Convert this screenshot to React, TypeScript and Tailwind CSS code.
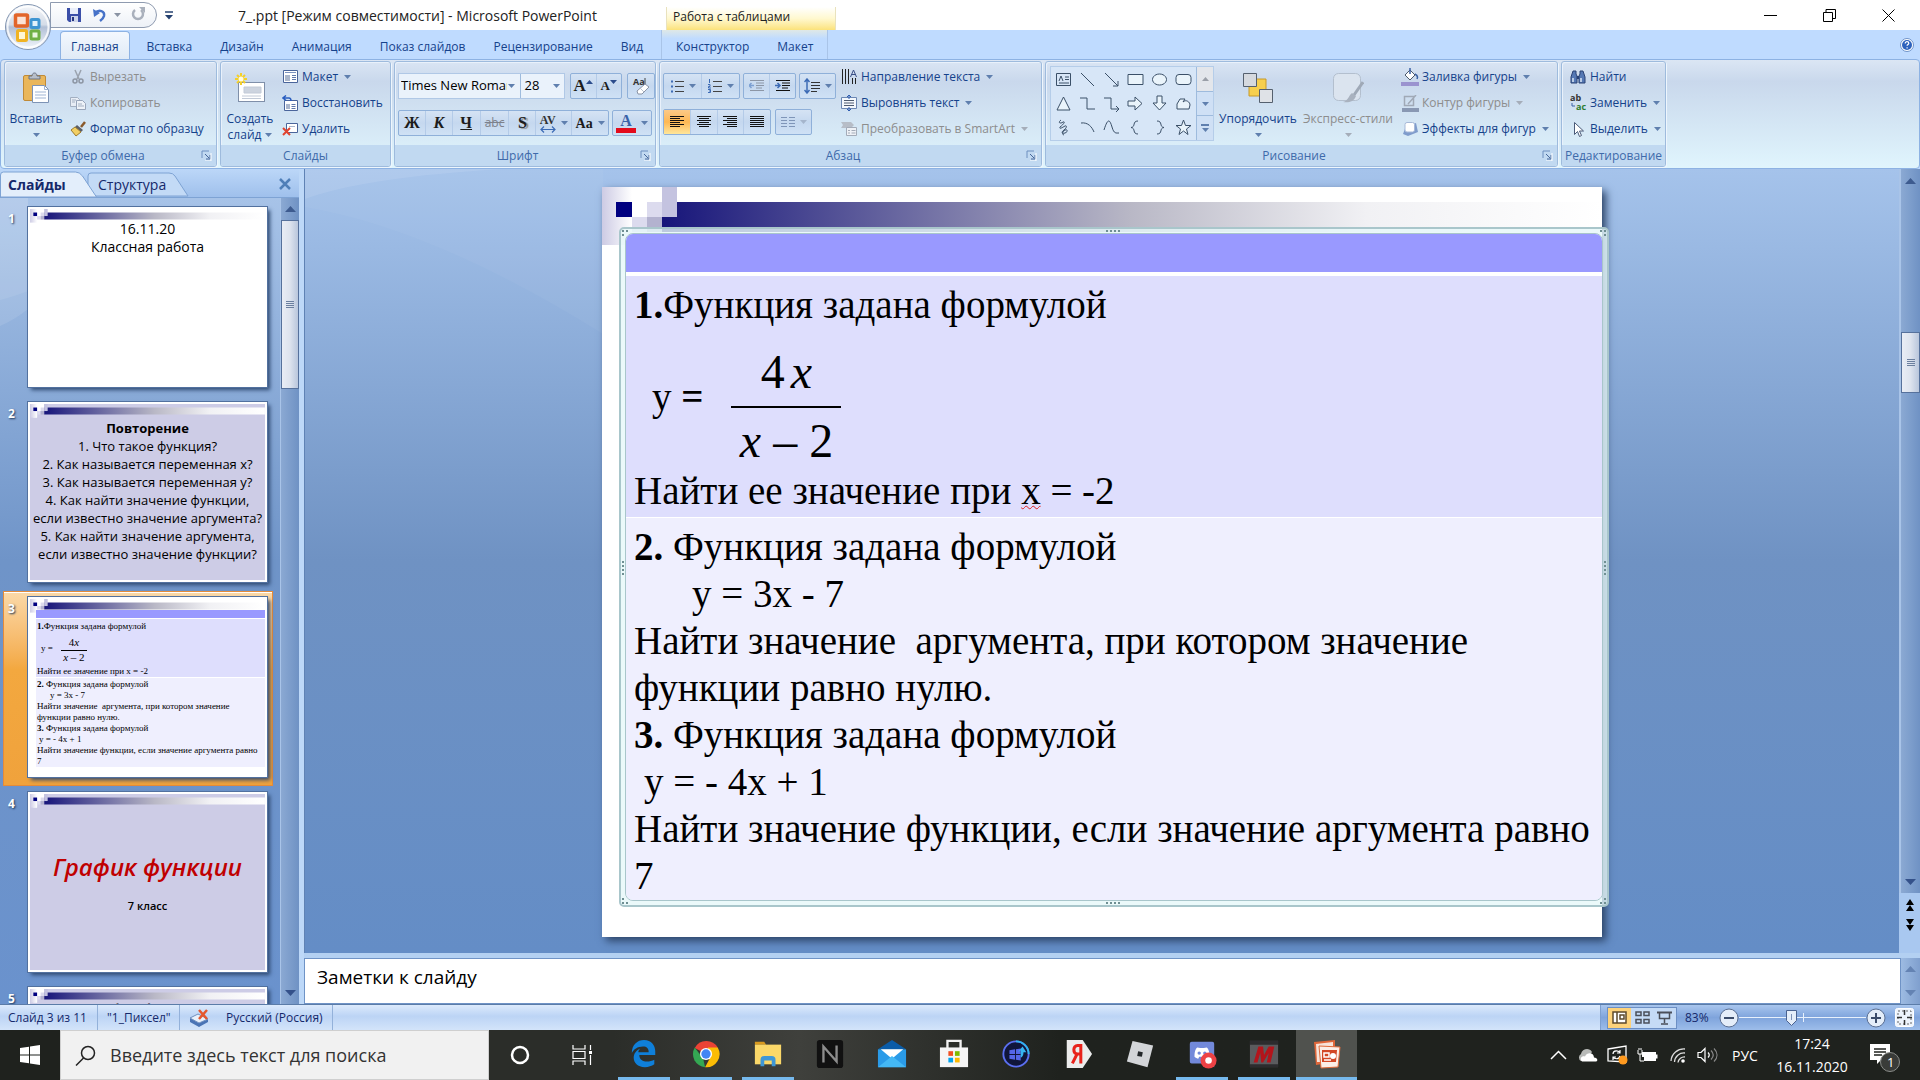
import type { ReactNode } from 'react';

const TABS = ['Вставка', 'Дизайн', 'Анимация', 'Показ слайдов', 'Рецензирование', 'Вид'];

const RUNNING = 'border-[#76b9ed]';
const IDLE = 'border-transparent';

/* ---------- small shared pieces ---------- */

function Caret({ className = 'text-[#5f7fae]' }: { className?: string }) {
  return (
    <svg width="7" height="4" viewBox="0 0 7 4" className={`shrink-0 ${className}`} aria-hidden="true">
      <path d="M0 0h7L3.5 4z" fill="currentColor" />
    </svg>
  );
}

function Svg({ w = 16, h = 16, children }: { w?: number; h?: number; children: ReactNode }) {
  return (
    <svg width={w} height={h} viewBox={`0 0 ${w} ${h}`} fill="none" className="shrink-0" aria-hidden="true">
      {children}
    </svg>
  );
}

function Group({ title, className, launcher, children }: { title: string; className: string; launcher?: boolean; children: ReactNode }) {
  return (
    <section
      aria-label={title}
      className={`flex shrink-0 flex-col overflow-hidden rounded-[3px] border border-[#9ebbdd] shadow-[inset_1px_1px_0_#e9f1fb,1px_1px_0_#eef6fd] ${className}`}
    >
      <div className="flex h-[84px] pt-[2px]">{children}</div>
      <div className="flex h-[21px] items-center bg-[#c1d9f1] text-xs leading-5 text-[#3e6aaa]">
        <span className="flex-1 text-center">{title}</span>
        {launcher && (
          <button type="button" aria-label={`${title}: параметры`} className="mr-1">
            <Svg w={11} h={11}>
              <path d="M1 8V1h7" stroke="#6d8fbf" />
              <path d="M4 4l4 4M9 5v4H5" stroke="#46679a" />
              <path d="M10 3v8H4" stroke="#fff" />
            </Svg>
          </button>
        )}
      </div>
    </section>
  );
}

function SmallButton({ icon, label, caret, disabled }: { icon: ReactNode; label: string; caret?: boolean; disabled?: boolean }) {
  return (
    <button
      type="button"
      disabled={disabled}
      className={`flex h-[26px] items-center gap-1 text-xs whitespace-nowrap ${disabled ? 'text-[#8d8d8d]' : 'text-[#15428b]'}`}
    >
      <span className="flex w-4 justify-center">{icon}</span>
      <span>{label}</span>
      {caret && <Caret className={disabled ? 'ml-[2px] text-[#a5adb9]' : 'ml-[2px] text-[#5f7fae]'} />}
    </button>
  );
}

function LargeButton({ icon, lines, className = '', disabled }: { icon: ReactNode; lines: string[]; className?: string; disabled?: boolean }) {
  return (
    <button
      type="button"
      disabled={disabled}
      className={`flex flex-col items-center text-xs leading-4 whitespace-nowrap ${disabled ? 'text-[#8d8d8d]' : 'text-[#15428b]'} ${className}`}
    >
      <span className="flex h-[47px] items-center">{icon}</span>
      <span>{lines[0]}</span>
      <span className="flex h-4 items-center gap-1">
        {lines[1]}
        <Caret className={disabled ? 'text-[#a5adb9]' : 'text-[#5f7fae]'} />
      </span>
    </button>
  );
}

function ButtonStrip({ className = '', children }: { className?: string; children: ReactNode }) {
  return (
    <div className={`flex h-[26px] divide-x divide-[#b4cbe8] rounded-[2px] border border-[#8fb0d9] bg-linear-to-b from-[#d5e3f4] via-[#c5d8ef] to-[#cfe1f5] ${className}`}>
      {children}
    </div>
  );
}

function Tool({ label, className = 'flex-1', children }: { label: string; className?: string; children: ReactNode }) {
  return (
    <button type="button" aria-label={label} className={`flex items-center justify-center gap-[5px] ${className}`}>
      {children}
    </button>
  );
}

function Lines({ rows, color = '#111' }: { rows: [number, number][]; color?: string }) {
  return (
    <Svg w={16} h={14}>
      {rows.map(([x, w], i) => (
        <path key={i} d={`M${x} ${i * 2 + 1.5}h${w}`} stroke={color} />
      ))}
    </Svg>
  );
}

/* ---------- title bar and tabs ---------- */

function OfficeButton() {
  return (
    <button type="button" aria-label="Кнопка Office" className="absolute top-[3px] left-[4px] z-10">
      <svg width="48" height="48" viewBox="0 0 48 48" aria-hidden="true">
        <defs>
          <linearGradient id="orb" x1="0" y1="0" x2="0" y2="1">
            <stop offset="0" stopColor="#f5f7fa" />
            <stop offset="0.45" stopColor="#d4dce8" />
            <stop offset="0.5" stopColor="#b2c0d6" />
            <stop offset="1" stopColor="#f4f8fd" />
          </linearGradient>
        </defs>
        <circle cx="24" cy="24" r="22.5" fill="url(#orb)" stroke="#8194b0" />
        <circle cx="24" cy="24" r="20.5" fill="none" stroke="#fff" strokeWidth="2" opacity="0.8" />
        <rect x="11.5" y="12" width="12" height="11" rx="1" fill="#fbe3d6" stroke="#e2652a" strokeWidth="3.5" />
        <rect x="27" y="16.5" width="8" height="8" rx="1" fill="#e3f1fb" stroke="#3f95d2" strokeWidth="3" />
        <rect x="13.5" y="27.5" width="9" height="10" rx="1" fill="#fff7d6" stroke="#f0b323" strokeWidth="3" />
        <rect x="27" y="28" width="8" height="8" rx="1" fill="#e9f6dd" stroke="#6fb043" strokeWidth="3" />
      </svg>
    </button>
  );
}

function TitleBar() {
  return (
    <header className="flex h-[30px] items-start bg-white pr-[10px]">
      <div className="mt-[2px] ml-[50px] flex h-[26px] w-[107px] items-center rounded-r-full border border-[#8f9bb0] bg-linear-to-b from-white to-[#edf1f7] pl-[15px]">
        <button type="button" aria-label="Сохранить">
          <Svg>
            <path d="M1 1h14v14H3l-2-2z" fill="#3b4fa8" />
            <path d="M4 1h8v6H4z" fill="#e9eefa" />
            <path d="M5 9h7v6H5z" fill="#cdd5ea" />
            <path d="M6 10h2v4H6z" fill="#26357f" />
          </Svg>
        </button>
        <button type="button" aria-label="Отменить" className="ml-[10px]">
          <Svg w={15}>
            <path d="M3 6c4-4 10-2 9 3-.5 2-2 3.5-4 5" stroke="#4672c8" strokeWidth="2.5" />
            <path d="M1 2l1 8 6-4z" fill="#4672c8" />
          </Svg>
        </button>
        <Caret className="ml-[7px] text-[#8a93a3]" />
        <button type="button" aria-label="Вернуть" className="ml-[10px]">
          <Svg w={14}>
            <path d="M4 3a5 5 0 1 0 6 0" stroke="#a9b0bc" strokeWidth="2.5" />
            <path d="M8 0h6v6z" fill="#a9b0bc" />
          </Svg>
        </button>
      </div>
      <button type="button" aria-label="Настройка панели быстрого доступа" className="mt-[11px] ml-[8px]">
        <Svg w={8} h={9}>
          <path d="M0 1h8" stroke="#24406f" strokeWidth="1.5" />
          <path d="M0 4h8L4 8.5z" fill="#24406f" />
        </Svg>
      </button>
      <h1 className="ml-[65px] w-[428px] text-[14px] leading-[32px] whitespace-nowrap text-[#222]">7_.ppt [Режим совместимости] - Microsoft PowerPoint</h1>
      <div className="mt-[7px] h-[23px] w-[170px] border-x border-[#e9e2bd] bg-linear-to-b from-white via-[#fff8cf] to-[#fbe27a] pl-[6px] text-xs leading-[19px] whitespace-nowrap text-[#222]">
        Работа с таблицами
      </div>
      <div className="ml-auto flex h-[30px] items-center gap-[46px]">
        <button type="button" aria-label="Свернуть">
          <Svg w={13} h={13}>
            <path d="M0 6.5h13" stroke="#000" />
          </Svg>
        </button>
        <button type="button" aria-label="Свернуть в окно">
          <Svg w={13} h={13}>
            <path d="M.5 3.5h9v9h-9zM3 3.5v-3h9.5v9H10" stroke="#000" />
          </Svg>
        </button>
        <button type="button" aria-label="Закрыть" className="mr-[15px]">
          <Svg w={13} h={13}>
            <path d="M.5.5l12 12M12.5.5l-12 12" stroke="#000" />
          </Svg>
        </button>
      </div>
    </header>
  );
}

function TabRow() {
  return (
    <nav className="flex h-[29px] items-end bg-[#bfdbff] pl-[60px] text-xs leading-[25px] whitespace-nowrap text-[#15428b]">
      <button type="button" className="h-[28px] rounded-t-[4px] border border-b-0 border-[#8db2e3] bg-linear-to-b from-[#f3f8fe] to-[#e0eaf6] px-[10px] pt-[2px]">
        Главная
      </button>
      <div className="ml-[3px] flex">
        {TABS.map((tab) => (
          <button key={tab} type="button" className="px-[14px]">
            {tab}
          </button>
        ))}
      </div>
      <div className="ml-[4px] flex h-[29px] items-end border-x border-[#a9c4e8] bg-linear-to-b from-[#dfe8e6] to-[#bfdbff] to-30%">
        <button type="button" className="px-[14px]">Конструктор</button>
        <button type="button" className="px-[14px]">Макет</button>
      </div>
      <button type="button" aria-label="Справка" className="mr-[6px] mb-[7px] ml-auto">
        <Svg w={14} h={14}>
          <circle cx="7" cy="7" r="6.5" fill="#fff" stroke="#6f93c9" />
          <circle cx="7" cy="7" r="5" fill="#2d62bd" />
          <path d="M5.2 5.5c0-2.5 3.6-2.3 3.6-.2 0 1.2-1.7 1.3-1.7 2.5M7.1 9.2v1.2" stroke="#fff" strokeWidth="1.2" />
        </Svg>
      </button>
    </nav>
  );
}

/* ---------- ribbon ---------- */

function ClipboardGroup() {
  return (
    <Group title="Буфер обмена" className="w-[213px]" launcher>
      <LargeButton
        className="w-[62px]"
        lines={['Вставить', '']}
        icon={
          <Svg w={28} h={32}>
            <rect x="1.5" y="3.5" width="22" height="25" rx="1.5" fill="#eab65a" stroke="#c08a37" />
            <path d="M7 7V4h3c0-4 5-4 5 0h3v3z" fill="#b7bec9" stroke="#6b7280" />
            <path d="M10.5 13.5h12l4 4v13h-16z" fill="#fff" stroke="#7d93b5" />
            <path d="M22.5 13.5v4h4M13 20h11M13 23h11M13 26h11" stroke="#9fb4d3" />
          </Svg>
        }
      />
      <div className="ml-[3px] flex flex-col">
        <SmallButton disabled label="Вырезать" icon={
          <Svg>
            <path d="M5 1l4 9M11 1L7 10" stroke="#9aa2ae" strokeWidth="1.5" />
            <circle cx="5" cy="12" r="2" stroke="#8c95a3" strokeWidth="1.5" />
            <circle cx="11" cy="12" r="2" stroke="#8c95a3" strokeWidth="1.5" />
          </Svg>
        } />
        <SmallButton disabled label="Копировать" icon={
          <Svg>
            <path d="M.5 2.5h7l2 2v7h-9z" fill="#e8edf5" stroke="#a3afc1" />
            <path d="M6.5 5.5h6l3 3v6h-9z" fill="#eef2f8" stroke="#98a5ba" />
            <path d="M8 9h4M8 11h6M2 5h4M2 7h3" stroke="#a3afc1" />
          </Svg>
        } />
        <SmallButton label="Формат по образцу" icon={
          <Svg>
            <path d="M15 1l-4 5" stroke="#8a5a2b" strokeWidth="2.5" />
            <path d="M7 4l6 5-2 2-6-5z" fill="#5b5f68" />
            <path d="M5 6l6 5-5 4-5-6z" fill="#f2cf63" stroke="#9c7a2c" />
          </Svg>
        } />
      </div>
    </Group>
  );
}

function SlidesGroup() {
  return (
    <Group title="Слайды" className="w-[171px]">
      <LargeButton
        className="w-[58px]"
        lines={['Создать', 'слайд']}
        icon={
          <Svg w={32} h={32}>
            <rect x="4.5" y="10.5" width="26" height="19" fill="#fff" stroke="#7f8fa9" />
            <path d="M10 15h17v6H10zM8 24h19M8 26.5h19" fill="#cdd4df" stroke="#c2cad7" />
            <path d="M7 1v12M1 7h12M3 3l8 8M11 3l-8 8" stroke="#f4cf2b" strokeWidth="2" />
            <circle cx="7" cy="7" r="2.5" fill="#fffbe0" />
          </Svg>
        }
      />
      <div className="ml-[3px] flex flex-col">
        <SmallButton caret label="Макет" icon={
          <Svg w={15} h={14}>
            <path d="M.5.5h14v12H.5z" fill="#fff" stroke="#4a659b" />
            <path d="M2 2.5h11" stroke="#7c93bf" />
            <path d="M2 5h5v6H2z" fill="#aab6cb" />
            <path d="M9 5.5h4M9 7.5h4M9 9.5h4" stroke="#5f78ab" />
          </Svg>
        } />
        <SmallButton label="Восстановить" icon={
          <Svg>
            <path d="M2.5 5.5h13v10h-13z" fill="#fff" stroke="#4a659b" />
            <path d="M4 9h4v5H4z" fill="#aab6cb" />
            <path d="M9.5 9.5h4M9.5 11.5h4M9.5 13.5h4" stroke="#5f78ab" />
            <path d="M2 3h5c2 0 2 2 2 3M4 .5L1 3l3 2.5" stroke="#2b5fc0" strokeWidth="1.5" />
          </Svg>
        } />
        <SmallButton label="Удалить" icon={
          <Svg>
            <path d="M4.5 2.5h11v9h-11z" fill="#fff" stroke="#4a659b" />
            <path d="M7 5.5h6" stroke="#aab6cb" />
            <path d="M1 7l7 7M8 7l-7 7" stroke="#e0432f" strokeWidth="2" />
          </Svg>
        } />
      </div>
    </Group>
  );
}

function FontGroup() {
  const glyph = "font-['Liberation_Serif',serif] font-bold text-[#1c1c1c]";
  return (
    <Group title="Шрифт" className="w-[262px]" launcher>
      <div className="flex flex-col gap-[11px] px-[3px] pt-[9px]">
        <div className="flex gap-[5px]">
          <div className="flex h-[26px] w-[167px] divide-x divide-[#9ebbdd] border border-[#b0c8e6] bg-[#eaf2fb] text-[13px]">
            <label className="flex w-[124px] items-center pr-[5px] pl-[2px]">
              <input aria-label="Шрифт" defaultValue="Times New Roman" className="w-[106px] min-w-0 flex-1 text-black outline-none" />
              <Caret className="ml-[1px] text-[#5f7fae]" />
            </label>
            <label className="flex w-[43px] items-center pr-[4px] pl-[3px]">
              <input aria-label="Размер шрифта" defaultValue="28" className="w-[20px] min-w-0 flex-1 text-black outline-none" />
              <Caret />
            </label>
          </div>
          <ButtonStrip className="w-[52px]">
            <Tool label="Увеличить размер шрифта">
              <span className={`text-[17px] ${glyph}`}>A</span>
              <span className="-ml-[5px] mb-[9px] rotate-180"><Caret className="text-[#2b4c8c]" /></span>
            </Tool>
            <Tool label="Уменьшить размер шрифта">
              <span className={`text-[13px] ${glyph}`}>A</span>
              <span className="-ml-[5px] mb-[9px]"><Caret className="text-[#2b4c8c]" /></span>
            </Tool>
          </ButtonStrip>
          <ButtonStrip className="w-[28px]">
            <Tool label="Очистить формат">
              <Svg w={18} h={20}>
                <text x="1" y="9" fontSize="9" fontWeight="700" fill="#333">Aa</text>
                <path d="M13 2v7" stroke="#444" />
                <path d="M5 15l8-7 4 3-7 7-4 0z" fill="#fff" stroke="#8a94a6" />
                <path d="M8 12l4 4" stroke="#b6bfcc" />
              </Svg>
            </Tool>
          </ButtonStrip>
        </div>
        <div className="flex gap-[3px] text-[16px]">
          <ButtonStrip className="w-[211px]">
            <Tool label="Полужирный" className={`w-[27px] ${glyph}`}>Ж</Tool>
            <Tool label="Курсив" className={`w-[27px] italic ${glyph}`}>К</Tool>
            <Tool label="Подчеркнутый" className={`w-[28px] underline ${glyph}`}>Ч</Tool>
            <Tool label="Зачеркнутый" className="w-[29px] text-xs text-[#7d828c] line-through">abc</Tool>
            <Tool label="Тень текста" className={`w-[27px] text-shadow-[2px_1px_1px_#888] ${glyph}`}>S</Tool>
            <Tool label="Межзнаковый интервал" className="w-[36px]">
              <span className="flex flex-col items-center">
                <span className="font-['Liberation_Serif',serif] text-[12px] leading-3 font-bold text-[#333]">AV</span>
                <Svg w={16} h={7}>
                  <path d="M1 3.5h14M4 .5l-3 3 3 3M12 .5l3 3-3 3" stroke="#3c6bb5" strokeWidth="1.2" />
                </Svg>
              </span>
              <Caret />
            </Tool>
            <Tool label="Регистр" className={`w-[36px] text-[14px] ${glyph}`}>
              Aa
              <Caret />
            </Tool>
          </ButtonStrip>
          <ButtonStrip className="w-[40px]">
            <Tool label="Цвет текста">
              <span className="w-[20px] border-b-[5px] border-[#e30b1c] text-center font-['Liberation_Serif',serif] leading-[15px] font-bold text-[#3a62a8]">A</span>
              <Caret />
            </Tool>
          </ButtonStrip>
        </div>
      </div>
    </Group>
  );
}

function ParagraphGroup() {
  const full: [number, number] = [1, 14];
  return (
    <Group title="Абзац" className="w-[383px]" launcher>
      <div className="flex flex-col gap-[10px] pt-[9px] pl-[3px]">
        <div className="flex gap-[3px]">
          <ButtonStrip className="w-[77px]">
            <Tool label="Маркеры">
              <Svg w={14} h={14}>
                <path d="M1 2.5h2M1 7.5h2M1 12.5h2" stroke="#3c6bb5" strokeWidth="2" />
                <path d="M5 2.5h9M5 7.5h9M5 12.5h9" stroke="#444" />
              </Svg>
              <Caret />
            </Tool>
            <Tool label="Нумерация">
              <Svg w={15} h={14}>
                <path d="M2.5 0v4M1 5.5h2v2H1.5v1.5H4M1 10.5h2.5v3H1M2 12h1" stroke="#3c6bb5" />
                <path d="M6 2.5h9M6 7.5h9M6 12.5h9" stroke="#444" />
              </Svg>
              <Caret />
            </Tool>
          </ButtonStrip>
          <ButtonStrip className="w-[53px]">
            <Tool label="Уменьшить уровень списка">
              <Svg>
                <path d="M1 2.5h14M7 5h8M7 7.5h8M7 10h6M1 12.5h14" stroke="#8c96a6" />
                <path d="M5 7.5H0M2.5 5L0 7.5 2.5 10" stroke="#7da0d2" strokeWidth="1.5" />
              </Svg>
            </Tool>
            <Tool label="Увеличить уровень списка">
              <Svg>
                <path d="M1 2.5h14M7 5h8M7 7.5h8M7 10h6M1 12.5h14" stroke="#111" />
                <path d="M0 7.5h5M2.5 5L5 7.5 2.5 10" stroke="#3c6bb5" strokeWidth="1.5" />
              </Svg>
            </Tool>
          </ButtonStrip>
          <ButtonStrip className="w-[37px]">
            <Tool label="Междустрочный интервал">
              <Svg w={16} h={16}>
                <path d="M3 1v14M.5 4L3 1l2.5 3M.5 12L3 15l2.5-3" stroke="#3c6bb5" strokeWidth="1.5" />
                <path d="M7 4.5h9M7 7.5h9M7 10.5h9M7 13.5h6" stroke="#333" />
              </Svg>
              <Caret />
            </Tool>
          </ButtonStrip>
        </div>
        <div className="flex gap-[4px]">
          <ButtonStrip className="w-[108px]">
            <Tool label="По левому краю" className="flex-1 bg-linear-to-b from-[#fbc987] via-[#fdb853] to-[#fee69a]">
              <Lines rows={[full, [1, 10], full, [1, 10], full, [1, 10]]} />
            </Tool>
            <Tool label="По центру">
              <Lines rows={[full, [3, 10], full, [3, 10], full, [3, 10]]} />
            </Tool>
            <Tool label="По правому краю">
              <Lines rows={[full, [5, 10], full, [5, 10], full, [5, 10]]} />
            </Tool>
            <Tool label="По ширине">
              <Lines rows={[full, full, full, full, full, full]} />
            </Tool>
          </ButtonStrip>
          <ButtonStrip className="w-[37px]">
            <Tool label="Колонки">
              <Svg w={14} h={13}>
                <path d="M0 1.5h6M0 4.5h6M0 7.5h6M0 10.5h6M8 1.5h6M8 4.5h6M8 7.5h6M8 10.5h6" stroke="#7f95b8" />
              </Svg>
              <Caret className="text-[#a5b5cc]" />
            </Tool>
          </ButtonStrip>
        </div>
      </div>
      <div className="ml-[5px] flex flex-col">
        <SmallButton caret label="Направление текста" icon={
          <Svg>
            <path d="M1.5 0v15M4.5 0v15M7.5 0v15M11.5 9v6M14.5 9v6" stroke="#222" />
            <path d="M9.5 8l3-7 3 7M10.5 5.5h4" stroke="#3a4f86" />
          </Svg>
        } />
        <SmallButton caret label="Выровнять текст" icon={
          <Svg>
            <path d="M.5 2.5h15v11H.5z" fill="#f4f8fd" stroke="#6c87b3" />
            <path d="M3 5.5h10M3 8h10M3 10.5h10" stroke="#4e5b70" />
            <path d="M8 0v4M8 12v4M6 2l2-2 2 2M6 14l2 2 2-2" stroke="#2c5bb0" />
          </Svg>
        } />
        <SmallButton caret disabled label="Преобразовать в SmartArt" icon={
          <Svg>
            <path d="M0 1h10l3 3-3 3H0l2-3z" fill="#b7bdc7" />
            <path d="M5.5 6.5h10v8h-10z" fill="#eef1f6" stroke="#a3abb8" />
            <path d="M7 9.5h2M7 12h2M10.5 9.5h4M10.5 12h4" stroke="#a3abb8" />
          </Svg>
        } />
      </div>
    </Group>
  );
}

const SHAPES: { name: string; d: string }[] = [
  { name: 'Надпись', d: 'M1.5 2.5h14v12h-14zM4 10l2-5 2 5M10 6h4M10 8.5h4M4 12h10' },
  { name: 'Линия', d: 'M2 2l13 13' },
  { name: 'Стрелка', d: 'M2 2l13 13M15 10v5h-5' },
  { name: 'Прямоугольник', d: 'M1 3.5h15v10H1z' },
  { name: 'Овал', d: 'M8.5 3a7 5.5 0 1 0 .01 0z' },
  { name: 'Скругленный прямоугольник', d: 'M4 3.5h9q3 0 3 3v4q0 3-3 3H4q-3 0-3-3v-4q0-3 3-3z' },
  { name: 'Треугольник', d: 'M8.5 2l6.5 13H2z' },
  { name: 'Соединитель', d: 'M1 3h7v11h8' },
  { name: 'Соединитель со стрелкой', d: 'M1 3h7v11h8M13 11l3 3-3 3' },
  { name: 'Стрелка вправо', d: 'M1 6h7V2l7 6.5L8 15v-4H1z' },
  { name: 'Стрелка вниз', d: 'M6 1h5v7h4l-6.5 7L2 8h4z' },
  { name: 'Полилиния', d: 'M5 4h5l-2 3c3-3 7 0 7 3l-1 4H2V9z' },
  { name: 'Рисованная кривая', d: 'M6 1c-4 3 0 4 2 2 3-1 0 3-3 5-1 3 3 0 5-1s2 2-1 4-2 4 1 3 3-4 0-3-3 5-1 5' },
  { name: 'Дуга', d: 'M2 4c7-1 11 4 13 9' },
  { name: 'Кривая', d: 'M1 11C5-2 7 1 9 8s4 6 7 6' },
  { name: 'Левая скобка', d: 'M11 2C5 2 9 8 4 8.5 9 9 5 15 11 15' },
  { name: 'Правая скобка', d: 'M6 2c6 0 2 6 7 6.5C8 9 12 15 6 15' },
  { name: 'Звезда', d: 'M8.5 1l2 5.5h5.5l-4.5 3.5 1.5 5.5-4.5-3.5L4 15.5l1.5-5.5L1 6.5h5.5z' },
];

function DrawingGroup() {
  return (
    <Group title="Рисование" className="w-[513px]" launcher>
      <div className="mt-[2px] ml-[4px] flex h-[75px] border border-[#b5cde9] bg-[#d7e6f7]">
        <div className="grid w-[145px] grid-cols-6 grid-rows-3">
          {SHAPES.map((shape) => (
            <button key={shape.name} type="button" aria-label={shape.name} className="flex items-center justify-center">
              <Svg w={17} h={17}>
                <path d={shape.d} stroke="#3b5068" fill={/z$/.test(shape.d) ? '#eaf4fb' : 'none'} />
              </Svg>
            </button>
          ))}
        </div>
        <div className="flex w-[17px] flex-col divide-y divide-[#9ebbdd] border-l border-[#9ebbdd]">
          <button type="button" aria-label="Вверх" className="flex flex-1 items-center justify-center bg-[#e3e6eb]">
            <span className="rotate-180"><Caret className="text-[#9a9fa8]" /></span>
          </button>
          <button type="button" aria-label="Вниз" className="flex flex-1 items-center justify-center bg-[#cfe0f5]"><Caret /></button>
          <button type="button" aria-label="Все фигуры" className="flex flex-1 flex-col items-center justify-center gap-[2px] bg-[#cfe0f5]">
            <span className="h-[2px] w-2 bg-[#5f7fae]" />
            <Caret />
          </button>
        </div>
      </div>
      <LargeButton
        className="ml-[1px] w-[86px]"
        lines={['Упорядочить', '']}
        icon={
          <Svg w={32} h={32}>
            <path d="M7 7h17v17H7z" fill="#f6cf4e" stroke="#c79a2b" />
            <path d="M1.5 1.5h13v13h-13z" fill="#d5d9df" stroke="#55606e" />
            <path d="M17.5 17.5h13v13h-13z" fill="#dfe2e7" stroke="#55606e" />
          </Svg>
        }
      />
      <LargeButton
        disabled
        className="w-[94px]"
        lines={['Экспресс-стили', '']}
        icon={
          <Svg w={32} h={32}>
            <rect x="1.5" y="1.5" width="27" height="27" rx="5" fill="#dbe4ef" stroke="#b3bfce" />
            <path d="M31 10l-9 13" stroke="#9fa9b7" strokeWidth="3" />
            <path d="M20 21l4 3c-2 6-8 7-13 6 5-1 6-7 9-9z" fill="#a9b2bf" />
          </Svg>
        }
      />
      <div className="ml-[7px] flex flex-col">
        <SmallButton caret label="Заливка фигуры" icon={
          <Svg w={18} h={18}>
            <path d="M4 7l5-5 5 5-5 5z" fill="#fff" stroke="#4d5a6c" />
            <path d="M9 0v6M14 6c2 1 3 3 2 5" stroke="#3b61a4" strokeWidth="1.5" />
            <path d="M0 14h18v4H0z" fill="#9a93cf" />
          </Svg>
        } />
        <SmallButton caret disabled label="Контур фигуры" icon={
          <Svg w={17} h={17}>
            <path d="M2.5 1.5h9v9h-9zM14 0L6 9" stroke="#a0a9b6" strokeWidth="1.5" />
            <path d="M0 13h17v4H0z" fill="#8998b3" />
          </Svg>
        } />
        <SmallButton caret label="Эффекты для фигур" icon={
          <Svg>
            <path d="M4 5l10-3 2 9-10 4-5-2z" fill="#7f9ccc" />
            <rect x="3" y="1.5" width="9.5" height="9.5" rx="2" fill="#fff" stroke="#a7b9d8" />
          </Svg>
        } />
      </div>
    </Group>
  );
}

function EditingGroup() {
  return (
    <Group title="Редактирование" className="w-[105px]">
      <div className="ml-[8px] flex flex-col">
        <SmallButton label="Найти" icon={
          <Svg>
            <path d="M3 2h3v3l1 2v7H1V8zM10 2h3l2 6v6H9V7l1-2z" fill="#5578b4" stroke="#2b4274" />
            <path d="M7 7h2v3H7z" fill="#2b4274" />
            <path d="M3 9v4M11 9v4" stroke="#dbe7f7" strokeWidth="1.5" />
          </Svg>
        } />
        <SmallButton caret label="Заменить" icon={
          <Svg w={17} h={18}>
            <text x="0" y="7" fontSize="9" fontWeight="700" fill="#333">ab</text>
            <text x="6" y="16" fontSize="9" fontWeight="700" fill="#2f7d32">ac</text>
            <path d="M2 9v3h3" stroke="#3b61a4" />
          </Svg>
        } />
        <SmallButton caret label="Выделить" icon={
          <Svg>
            <path d="M4.5 1.5v12l3-3 2 5 2-1-2-4.5h4z" fill="#fff" stroke="#4a5a78" />
          </Svg>
        } />
      </div>
    </Group>
  );
}

function Ribbon() {
  return (
    <div className="flex h-[110px] gap-[3px] rounded-[4px] border border-[#8db2e3] bg-linear-to-b from-[#dbe6f4] from-0% via-[#c9d8ec] via-20% to-[#e0f5fd] to-100% pt-px pb-px pl-[3px]">
      <ClipboardGroup />
      <SlidesGroup />
      <FontGroup />
      <ParagraphGroup />
      <DrawingGroup />
      <EditingGroup />
    </div>
  );
}

/* ---------- slide artwork ---------- */

function SlideDecor() {
  return (
    <svg viewBox="0 0 1000 60" className="absolute inset-x-0 top-0 w-full" aria-hidden="true">
      <defs>
        <linearGradient id="bar">
          <stop offset="0" stopColor="#17157a" />
          <stop offset="0.5" stopColor="#b9b8c6" />
          <stop offset="0.75" stopColor="#f1f1f4" />
          <stop offset="1" stopColor="#fff" />
        </linearGradient>
        <linearGradient id="edge">
          <stop offset="0" stopColor="#cdcbe4" />
          <stop offset="1" stopColor="#fff" />
        </linearGradient>
      </defs>
      <path d="M14 0h46v30H30v28H14z" fill="#fff" />
      <path d="M60 15h940v30H60z" fill="url(#bar)" />
      <path d="M0 0h30v58H0z" fill="url(#edge)" />
      <path d="M14 15h16v15H14z" fill="#000080" />
      <path d="M60 0h15v30H60z" fill="#c4c3e0" />
      <path d="M45 15h15v15H45z" fill="#dcdbee" />
      <path d="M30 30h15v15H30z" fill="#dcdbee" />
      <path d="M45 30h15v15H45z" fill="#b3b2cf" />
    </svg>
  );
}

function Handle({ className }: { className: string }) {
  return (
    <span className={`absolute flex gap-[2px] ${className}`}>
      {[0, 1, 2, 3].map((i) => (
        <i key={i} className="size-[2px] bg-[#6f8f93]" />
      ))}
    </span>
  );
}

function Corner({ className }: { className: string }) {
  return (
    <span className={`absolute grid grid-cols-2 gap-[2px] ${className}`}>
      {[0, 1, 2].map((i) => (
        <i key={i} className="size-[2px] bg-[#6f8f93]" />
      ))}
    </span>
  );
}

function MainSlide() {
  return (
    <article className="relative mx-auto mt-[18px] h-[750px] w-[1000px] bg-white shadow-[4px_4px_8px_#2c4468]">
      <SlideDecor />
      <div className="absolute top-[40px] left-[17px] w-[990px] rounded-[5px] border-2 border-[#a9c6cb] bg-[#e6f8f9]/80 p-[4px]">
        <div className="overflow-hidden rounded-[8px] border border-[#a9c6cb]">
          <table className="w-full border-collapse font-['Liberation_Serif','Times_New_Roman',serif] text-[39px] leading-[47px] text-black">
            <tbody>
              <tr>
                <td aria-label="Заголовок" className="h-[40px] border-b-4 border-white bg-[#9999ff] p-0" />
              </tr>
              <tr>
                <td className="border-b border-white bg-[#dedefd] px-[8px] pt-[5px] pb-[3px] whitespace-pre">
                  <p><b>1.</b>Функция задана формулой</p>
                  <div className="flex h-[139px] pl-[18px]">
                    <span className="pt-[45px]">y <b>=</b></span>
                    <div className="ml-[28px] flex w-[110px] flex-col pt-[20px] text-center text-[48px] leading-[48px]">
                      <span className="border-b-2 border-black pb-[10px]">4<i className="ml-[6px]">x</i></span>
                      <span className="pt-[9px]"><i>x</i> – 2</span>
                    </div>
                  </div>
                  <p>Найти ее значение при <span className="underline decoration-[#e02020] decoration-wavy decoration-1">х</span> = -2</p>
                </td>
              </tr>
              <tr>
                <td className="bg-[#efeffe] px-[8px] pt-[5px] pb-px whitespace-pre">
                  <p><b>2.</b> Функция задана формулой</p>
                  <p className="pl-[58px]">y = 3x - 7</p>
                  <p>{'Найти значение  аргумента, при котором значение'}</p>
                  <p>функции равно нулю.</p>
                  <p><b>3.</b> Функция задана формулой</p>
                  <p className="pl-[10px]">y = - 4x + 1</p>
                  <p>Найти значение функции, если значение аргумента равно</p>
                  <p>7</p>
                </td>
              </tr>
            </tbody>
          </table>
        </div>
        <Handle className="top-[1px] left-[485px]" />
        <Handle className="bottom-[1px] left-[485px]" />
        <Handle className="top-[332px] left-[1px] flex-col" />
        <Handle className="top-[332px] right-[1px] flex-col" />
        <Corner className="top-[1px] left-[1px]" />
        <Corner className="top-[1px] right-[1px] rotate-90" />
        <Corner className="bottom-[1px] left-[1px] -rotate-90" />
        <Corner className="right-[1px] bottom-[1px] rotate-180" />
      </div>
    </article>
  );
}

/* ---------- slides pane ---------- */

function Thumb({ number, tinted, selected, children }: { number: number; tinted?: boolean; selected?: boolean; children: ReactNode }) {
  return (
    <li
      className={`mr-[7px] ml-[3px] flex h-[195px] shrink-0 border pt-[5px] ${
        selected ? 'border-[#e58b39] bg-linear-to-b from-[#fbd9a8] via-[#f3a83f] via-40% to-[#f0a23c] shadow-[inset_0_1px_0_#fff]' : 'border-transparent'
      }`}
    >
      <span className="w-[24px] pt-[3px] pl-[4px] text-[12px] font-bold text-white text-shadow-[1px_1px_2px_#1d3557]">{number}</span>
      <button
        type="button"
        aria-label={`Слайд ${number}`}
        className={`relative block h-[180px] w-[239px] overflow-hidden border-2 border-white text-center text-black shadow-[0_0_0_1px_#52719f,3px_3px_4px_#2f4a72] ${tinted ? 'bg-[#cdcce6]' : 'bg-white'}`}
      >
        <SlideDecor />
        <div className="absolute inset-0">{children}</div>
      </button>
    </li>
  );
}

function MiniTable() {
  return (
    <div className="ml-[6px] pt-[11px] text-left font-['Liberation_Serif','Times_New_Roman',serif] text-[9px] leading-[11px] whitespace-pre">
      <div className="h-[9px] border-b border-white bg-[#9999ff]" />
      <div className="border-b border-white bg-[#dedefd] pt-[2px] pl-px">
        <p><b>1.</b>Функция задана формулой</p>
        <div className="flex h-[34px] pl-[4px]">
          <span className="pt-[11px]">y =</span>
          <span className="ml-[8px] flex w-[26px] flex-col pt-[4px] text-center text-[11px]">
            <span className="border-b border-black pb-[2px] leading-[12px]">4<i>x</i></span>
            <span className="leading-[13px]"><i>x</i> – 2</span>
          </span>
        </div>
        <p>Найти ее значение при х = -2</p>
      </div>
      <div className="bg-[#efeffe] pt-px pl-px">
        <p><b>2.</b> Функция задана формулой</p>
        <p className="pl-[13px]">y = 3x - 7</p>
        <p>{'Найти значение  аргумента, при котором значение'}</p>
        <p>функции равно нулю.</p>
        <p><b>3.</b> Функция задана формулой</p>
        <p className="pl-[2px]">y = - 4x + 1</p>
        <p>Найти значение функции, если значение аргумента равно</p>
        <p>7</p>
      </div>
    </div>
  );
}

function Arrow({ color }: { color: string }) {
  return (
    <Svg w={11} h={6}>
      <path d="M0 0h11L5.5 6z" fill={color} />
    </Svg>
  );
}

function ScrollThumb({ className }: { className: string }) {
  return (
    <div className={`flex w-full flex-col items-center justify-center gap-[1px] border border-[#56719c] bg-linear-to-r from-[#e9edf5] via-[#dde3ee] to-[#b9c6dc] ${className}`}>
      {[0, 1, 2, 3].map((i) => (
        <i key={i} className="h-px w-[8px] bg-[#6b7f9f]" />
      ))}
    </div>
  );
}

function SlidesPane() {
  return (
    <aside className="flex w-[299px] shrink-0 flex-col">
      <div className="relative flex h-[29px] items-end border-b border-[#7ea3d4] bg-linear-to-b from-[#bcd7f8] to-[#9fc0ec] text-[14px] leading-[24px] text-[#15296b]">
        <svg width="190" height="26" viewBox="0 0 190 26" className="absolute bottom-0 left-0" aria-hidden="true">
          <path d="M88 25V5q0-3 3-3h78q4 0 6 3l13 20z" fill="#c3daf6" stroke="#7ea3d4" />
          <path d="M.5 26V4q0-3 3-3h72q4 0 7 4l14 21z" fill="#e3eefb" stroke="#7ea3d4" />
        </svg>
        <button type="button" className="relative w-[90px] pl-[8px] text-left text-[14px] font-bold">Слайды</button>
        <button type="button" className="relative pl-[8px]">Структура</button>
        <button type="button" aria-label="Закрыть" className="relative mr-[8px] mb-[7px] ml-auto">
          <Svg w={12} h={12}>
            <path d="M1 1l10 10M11 1L1 11" stroke="#4f7fb8" strokeWidth="2.5" />
          </Svg>
        </button>
      </div>
      <div className="relative flex min-h-0 flex-1 bg-linear-to-b from-[#a7c3e8] via-[#6f94c8] via-45% to-[#6a92cd]">
        <svg width="28" height="130" viewBox="0 0 28 130" className="absolute top-0 left-0" aria-hidden="true">
          <path d="M0 0h28v93Q12 99 0 102z" fill="#fff" opacity="0.08" />
          <path d="M0 0h28v111Q14 122 0 128z" fill="#fff" opacity="0.1" />
        </svg>
        <ol className="relative flex min-w-0 flex-1 flex-col overflow-hidden pt-[3px]">
          <Thumb number={1}>
            <div className="pt-[11px] text-[14px] leading-[18px] font-medium">
              <p>16.11.20</p>
              <p>Классная работа</p>
            </div>
          </Thumb>
          <Thumb number={2} tinted>
            <div className="pt-[15px] text-[13px] leading-[18px] font-medium whitespace-nowrap">
              <p className="font-bold">Повторение</p>
              <p>1. Что такое функция?</p>
              <p>2. Как называется переменная х?</p>
              <p>3. Как называется переменная у?</p>
              <p>4. Как найти значение функции,</p>
              <p>если известно значение аргумента?</p>
              <p>5. Как найти значение аргумента,</p>
              <p>если известно значение функции?</p>
            </div>
          </Thumb>
          <Thumb number={3} selected>
            <MiniTable />
          </Thumb>
          <Thumb number={4} tinted>
            <p className="pt-[56px] text-[24px] leading-[34px] font-semibold text-[#c00000] italic">График функции</p>
            <p className="pt-[14px] text-[11px] leading-[16px] font-semibold">7 класс</p>
          </Thumb>
          <Thumb number={5} tinted>
            <p className="pt-[10px] text-[13px] leading-[18px] font-bold">График функции</p>
          </Thumb>
        </ol>
        <div className="relative flex w-[19px] flex-col items-center border-l border-[#a9c4e8] bg-linear-to-r from-[#8ba9d3] to-[#6f92c4]">
          <span className="flex h-[22px] shrink-0 rotate-180 items-center"><Arrow color="#3d5b8f" /></span>
          <ScrollThumb className="h-[169px]" />
          <span className="mt-auto flex h-[22px] shrink-0 items-center"><Arrow color="#34518a" /></span>
        </div>
      </div>
    </aside>
  );
}

/* ---------- workspace ---------- */

function Workspace() {
  return (
    <main className="flex min-h-0 flex-1 bg-[#bdd8f8]">
      <SlidesPane />
      <div className="ml-[5px] flex min-w-0 flex-1 flex-col">
        <div className="flex min-h-0 flex-1 border-l border-[#5f82b4]">
          <div className="relative min-w-0 flex-1 overflow-hidden bg-linear-to-b from-[#a5c3eb] from-0% via-[#6f92c3] via-50% to-[#648dc6] to-100%">
            <svg width="298" height="180" viewBox="0 0 298 180" className="absolute top-0 left-0" aria-hidden="true">
              <path d="M0 30Q60 8 200 0H0z" fill="#fff" opacity="0.12" />
              <path d="M0 38Q130 60 298 165V0H200Q60 8 0 30z" fill="#fff" opacity="0.04" />
            </svg>
            <MainSlide />
          </div>
          <div className="flex w-[21px] flex-col bg-[#a9c8f0]">
            <div className="flex flex-1 flex-col items-center border-l-2 border-[#a9c4e8] bg-linear-to-r from-[#8ba9d3] to-[#6f92c4]">
              <span className="flex h-[24px] rotate-180 items-center"><Arrow color="#3d5b8f" /></span>
              <ScrollThumb className="mt-[139px] h-[61px]" />
              <span className="mt-auto flex h-[22px] items-center"><Arrow color="#34518a" /></span>
            </div>
            <div className="flex h-[60px] flex-col items-center gap-[8px] pt-[6px]">
              <button type="button" aria-label="Предыдущий слайд"><Svg w={8} h={12}><path d="M0 6l4-6 4 6zM0 12l4-6 4 6z" fill="#000" /></Svg></button>
              <button type="button" aria-label="Следующий слайд"><Svg w={8} h={12}><path d="M0 0h8L4 6zM0 6h8l-4 6z" fill="#000" /></Svg></button>
            </div>
          </div>
        </div>
        <div className="flex h-[51px] border-t-[5px] border-[#b3d0f2]">
          <div className="flex flex-1 border border-[#6f93c6] bg-white">
            <label htmlFor="notes" className="sr-only">Заметки</label>
            <textarea id="notes" defaultValue="Заметки к слайду" className="h-full w-full resize-none px-[12px] pt-[4px] text-[19px] leading-[28px] text-black outline-none" />
          </div>
          <div className="flex w-[19px] flex-col items-center justify-between bg-linear-to-r from-[#9dbbe2] to-[#7f9fce] py-[8px]">
            <span className="rotate-180"><Arrow color="#6483b3" /></span>
            <Arrow color="#6483b3" />
          </div>
        </div>
      </div>
    </main>
  );
}

function StatusBar() {
  return (
    <footer className="flex h-[26px] shrink-0 items-stretch border-t border-[#5b7ca8] bg-linear-to-b from-[#dceafc] from-0% via-[#bcd4f5] via-45% to-[#d3e4fa] text-xs leading-[25px] text-[#15296b]">
      <span className="w-[98px] border-r border-[#93b1da] pl-[8px]">Слайд 3 из 11</span>
      <span className="w-[82px] border-r border-[#93b1da] pl-[9px]">"1_Пиксел"</span>
      <div className="flex w-[153px] items-center gap-[16px] border-r border-[#93b1da] pl-[9px]">
        <Svg w={21} h={20}>
          <path d="M1 10l9 5 9-4v3l-9 5-9-5z" fill="#4a74b5" />
          <path d="M1 10l8-4 10 5-9 4z" fill="#e9f0fa" stroke="#6f8fbf" />
          <path d="M10 2l8 9M18 2l-8 9" stroke="#e4572e" strokeWidth="2.5" />
        </Svg>
        <button type="button">Русский (Россия)</button>
      </div>
      <div className="ml-auto flex items-center border-l border-[#7d9fd0] bg-linear-to-b from-[#a9c6ee] via-[#7fa4dc] to-[#9dbdea] pr-[6px] pl-[6px]">
        <div className="flex h-[22px] border border-[#6c8fc4] bg-[#c5dbf6]">
          <button type="button" aria-label="Обычный" className="flex w-[23px] items-center justify-center bg-[#fdd27b]">
            <Svg w={15} h={13}>
              <path d="M1 1h13v11H1zM5 1v11M8 4h4v4H8z" stroke="#5e4a2c" strokeWidth="1.5" fill="#fff" />
            </Svg>
          </button>
          <button type="button" aria-label="Сортировщик слайдов" className="flex w-[22px] items-center justify-center">
            <Svg w={15} h={13}>
              <path d="M1 1h5v3.5H1zM9 1h5v3.5H9zM1 8.5h5V12H1zM9 8.5h5V12H9z" stroke="#4a4f5a" strokeWidth="1.5" />
            </Svg>
          </button>
          <button type="button" aria-label="Показ слайдов" className="flex w-[23px] items-center justify-center">
            <Svg w={15} h={14}>
              <path d="M0 1.5h15" stroke="#4a4f5a" strokeWidth="2" />
              <path d="M2.5 2v5.5h10V2M7.5 8v4M4 13h7" stroke="#4a4f5a" strokeWidth="1.5" />
            </Svg>
          </button>
        </div>
        <span className="w-[42px] pl-[8px]">83%</span>
        <button type="button" aria-label="Уменьшить">
          <Svg w={20} h={20}>
            <circle cx="10" cy="10" r="9" fill="#e4edf9" stroke="#5b6f92" />
            <path d="M5 10h10" stroke="#3b4c6b" strokeWidth="2" />
          </Svg>
        </button>
        <div className="relative flex h-[20px] w-[127px] items-center">
          <span className="h-px w-full bg-[#e8f1fc]" />
          <span className="absolute left-1/2 h-[9px] w-px bg-[#e8f1fc]" />
          <input type="range" aria-label="Масштаб" min="10" max="400" defaultValue="83" className="absolute inset-0 w-full opacity-0" />
          <span className="pointer-events-none absolute left-[47px]">
            <Svg w={11} h={16}>
              <path d="M.5.5h10v10l-5 5-5-5z" fill="#e4edf9" stroke="#4a6290" />
              <path d="M5.5 4v6" stroke="#7d92b8" />
            </Svg>
          </span>
        </div>
        <button type="button" aria-label="Увеличить">
          <Svg w={20} h={20}>
            <circle cx="10" cy="10" r="9" fill="#e4edf9" stroke="#5b6f92" />
            <path d="M5 10h10M10 5v10" stroke="#3b4c6b" strokeWidth="2" />
          </Svg>
        </button>
        <button type="button" aria-label="Вписать слайд в окно" className="ml-[9px]">
          <Svg w={19} h={19}>
            <rect x=".5" y=".5" width="18" height="18" rx="2" fill="#eef4fc" stroke="#fff" />
            <path d="M3 3h13v13H3z" stroke="#666" strokeDasharray="2 2" />
            <path d="M9.5 2v5M9.5 12v5M2 9.5h5M12 9.5h5" stroke="#333" strokeWidth="1.5" />
          </Svg>
        </button>
      </div>
    </footer>
  );
}

/* ---------- taskbar ---------- */

const APPS: { name: string; running?: boolean; icon: ReactNode }[] = [
  { name: 'Microsoft Edge', running: true, icon: (
    <path d="M3 15C3 6 9 1 16 1c8 0 12 6 12 12v4H11c0 5 4 7 8 7 3 0 6-1 8-2v5c-3 2-6 3-10 3C9 30 5 25 5 20c0-5 3-8 7-10-2 2-2 3-2 4h11c0-4-2-6-6-6-6 0-10 3-12 7z" fill="#0f7fd9" />
  ) },
  { name: 'Google Chrome', running: true, icon: (
    <>
      <path d="M16 16L4 9.5A14 14 0 0 1 28.5 9z" fill="#ea4335" />
      <path d="M4 9l9 12 2 9A14 14 0 0 1 4 9z" fill="#34a853" />
      <path d="M28.5 9A14 14 0 0 1 15 30l6-11-3-10z" fill="#fbbc05" />
      <circle cx="16" cy="16" r="6.5" fill="#fff" />
      <circle cx="16" cy="16" r="5" fill="#4285f4" />
    </>
  ) },
  { name: 'Проводник', running: true, icon: (
    <>
      <path d="M2 3h10l2 3H2z" fill="#d99a1f" />
      <path d="M2 6h28v21H2z" fill="#fbd869" />
      <path d="M8 29v-7q0-4 4-4h8q4 0 4 4v7h-4v-6h-8v6z" fill="#3f97d6" />
    </>
  ) },
  { name: 'N', icon: (
    <>
      <rect x="2" y="1" width="28" height="30" rx="3" fill="#111" />
      <path d="M9 25V8l14 16V7" stroke="#8d8d8d" strokeWidth="2.5" />
    </>
  ) },
  { name: 'Почта', icon: (
    <>
      <path d="M1 11L16 1l15 10z" fill="#0a5ca8" />
      <path d="M1 11h30v19H1z" fill="#2a9be8" />
      <path d="M4 11h24L16 21z" fill="#fff" />
      <path d="M1 30l15-12 15 12z" fill="#44b8f5" />
    </>
  ) },
  { name: 'Microsoft Store', icon: (
    <>
      <path d="M9 10V2h14v8" stroke="#f2f2f2" strokeWidth="2.5" />
      <path d="M1 9h30v21H1z" fill="#f5f5f5" />
      <path d="M10 13h5v5h-5z" fill="#f25022" />
      <path d="M17 13h5v5h-5z" fill="#7fba00" />
      <path d="M10 20h5v5h-5z" fill="#00a4ef" />
      <path d="M17 20h5v5h-5z" fill="#ffb900" />
    </>
  ) },
  { name: 'Ускоритель', icon: (
    <>
      <circle cx="16" cy="16" r="13.5" fill="#10163a" stroke="#5b6ff0" strokeWidth="2" />
      <path d="M16 2.5A13.5 13.5 0 0 1 29.5 16" stroke="#2fb4f0" strokeWidth="2" />
      <path d="M9 12l6-1v5H9zM16 11l5-1v6h-5zM9 17h6v5l-6-1zM16 17h5v6l-5-1z" fill="#5566e8" />
      <path d="M21 20V12l-3 2 5-6 4 6h-3c0 3-1 5-3 6z" fill="#35b5f0" />
    </>
  ) },
  { name: 'Яндекс', icon: (
    <>
      <path d="M4 1h17l10 15-10 15H4z" fill="#ececec" />
      <path d="M19 26V7h-3.5c-5 0-5.5 8.5 0 9H19M15 16l-5 10" stroke="#e8221b" strokeWidth="3.2" />
    </>
  ) },
  { name: 'Roblox', icon: (
    <>
      <path d="M8 2l22 5-6 23-22-6z" fill="#d3d5d8" />
      <path d="M14 13l5 1-1 5-5-1z" fill="#23272a" />
    </>
  ) },
  { name: 'Discord', running: true, icon: (
    <>
      <path d="M5 3h22q2 0 2 2v25l-7-4H5q-2 0-2-2V5q0-2 2-2z" fill="#7289da" />
      <path d="M8 19c0-5 1-9 3-10l3 .5h4l3-.5c2 1 3 5 3 10-1 1-3 2-4 2l-1-2h-6l-1 2c-1 0-3-1-4-2z" fill="#fff" />
      <circle cx="13" cy="15" r="1.8" fill="#7289da" />
      <circle cx="19" cy="15" r="1.8" fill="#7289da" />
      <circle cx="23" cy="23" r="8.5" fill="#ed4245" />
      <circle cx="23" cy="23" r="3.5" fill="#fff" />
    </>
  ) },
  { name: 'MSI', running: true, icon: (
    <>
      <rect x="1" y="2" width="30" height="28" fill="#5b5b5e" />
      <path d="M1 2h30v4H1zM1 27h30v3H1z" fill="#2c2c2e" />
      <path d="M5 25L10 8h5l1 9 5-9h6l-4 17h-4l2-10-6 10h-2l-1-10-3 10z" fill="#b3141b" />
    </>
  ) },
];

function Taskbar() {
  return (
    <div className="flex h-[50px] shrink-0 bg-[#1f221e] text-white">
      <button type="button" aria-label="Пуск" className="flex w-[60px] items-center justify-center">
        <Svg w={20} h={20}>
          <path d="M0 3l9-1.3V9.5H0zM10 1.5L20 0v9.5H10zM0 10.5h9v7.8L0 17zM10 10.5h10V20l-10-1.5z" fill="#fff" />
        </Svg>
      </button>
      <label className="flex w-[429px] items-center gap-[14px] border border-[#cfcfcf] bg-[#f1f1f1] pl-[14px]">
        <Svg w={21} h={21}>
          <circle cx="13" cy="8" r="6.5" stroke="#222" strokeWidth="1.5" />
          <path d="M8.5 13L1 20.5" stroke="#222" strokeWidth="1.5" />
        </Svg>
        <input aria-label="Поиск" placeholder="Введите здесь текст для поиска" className="w-full text-[18px] outline-none placeholder:text-[#333]" />
      </label>
      <button type="button" aria-label="Кортана" className="flex w-[62px] items-center justify-center bg-[#2b2d29]">
        <Svg w={20} h={20}>
          <circle cx="10" cy="10" r="8" stroke="#fff" strokeWidth="2.5" />
        </Svg>
      </button>
      <button type="button" aria-label="Представление задач" className="flex w-[62px] items-center justify-center bg-[#2b2d29]">
        <Svg w={21} h={20}>
          <path d="M1 0v4h12V0M1 6.5h12v7H1zM1 20v-4h12v4M18.5 0v5M18.5 10v10" stroke="#fff" strokeWidth="1.2" />
          <path d="M17 6h3v3h-3z" fill="#fff" />
        </Svg>
      </button>
      <div className="flex bg-linear-to-r from-[#2b2d29] via-[#3f403c] via-25% to-[#1f221e] to-60%">
        {APPS.map((app) => (
          <button key={app.name} type="button" aria-label={app.name} className="flex w-[62px] justify-center px-[5px]">
            <span className={`flex w-full items-center justify-center border-b-[3px] ${app.running ? RUNNING : IDLE}`}>
              <svg width="30" height="30" viewBox="0 0 32 32" fill="none" aria-hidden="true">{app.icon}</svg>
            </span>
          </button>
        ))}
        <button type="button" aria-label="PowerPoint" className={`ml-[1px] flex w-[61px] items-center justify-center border-b-[3px] bg-[#50524e] ${RUNNING}`}>
          <Svg w={30} h={30}>
            <path d="M2 3l21-2v22L4 26z" fill="#e0673a" />
            <path d="M4 5l17-2v5H8v15H5z" fill="#f7e3da" />
            <path d="M7 7l21 1-2 20-17 1z" fill="#fbeee8" stroke="#e06a3a" />
            <path d="M10 11h15l-1 12H10z" fill="#d24726" />
            <path d="M12 14h5v4h-5zM12 21h7" stroke="#fff" strokeWidth="1.5" />
            <circle cx="21" cy="17" r="3" fill="#fff" />
          </Svg>
        </button>
      </div>
      <div className="ml-auto flex items-center text-[14px]">
        <button type="button" aria-label="Скрытые значки"><Svg w={17} h={10}><path d="M1 9l7.5-7.5L16 9" stroke="#fff" strokeWidth="1.5" /></Svg></button>
        <span className="ml-[10px]">
          <Svg w={21} h={14}>
            <path d="M4 13a4 4 0 0 1 0-7c1-5 8-7 11-2l-6 9z" fill="#b8bab8" />
            <path d="M5 13.5c-3-3 0-6 3-5 2-5 9-4 9 1 4 0 4 4 2 4z" fill="#fff" />
          </Svg>
        </span>
        <span className="ml-[9px]">
          <Svg w={21} h={20}>
            <path d="M1 4l18-3v16l-18-1z" stroke="#fff" strokeWidth="1.3" />
            <path d="M6 9c0-4 6-4 7-1M13 5v3h-3M13 11c-1 4-6 3-7 1M6 15v-3h3" stroke="#fff" strokeWidth="1.2" />
            <circle cx="16" cy="15" r="4.5" fill="#ff9a1f" />
          </Svg>
        </span>
        <span className="ml-[9px]">
          <Svg w={21} h={15}>
            <path d="M5 4h14v9H7V9H5zM19 6.5h1.5v4H19z" fill="#fff" />
            <path d="M1 2v4h4V2M2 0v2M4 0v2M3 6v7h4" stroke="#fff" />
          </Svg>
        </span>
        <span className="ml-[12px]">
          <Svg w={16} h={16}>
            <path d="M1 14A13 13 0 0 1 15 2M4.5 15A9.5 9.5 0 0 1 15 6M8 15.5A6.5 6.5 0 0 1 15 10" stroke="#ddd" strokeWidth="1.3" />
            <circle cx="13" cy="14" r="1.8" fill="#fff" />
          </Svg>
        </span>
        <span className="ml-[11px]">
          <Svg w={21} h={16}>
            <path d="M1 5.5h3l4-4v13l-4-4H1zM11 5.5c1.5 1.5 1.5 3.5 0 5" stroke="#fff" strokeWidth="1.2" />
            <path d="M14 3.5c3 3 3 6 0 9M17 1.5c4 4 4 9 0 13" stroke="#888" strokeWidth="1.2" />
          </Svg>
        </span>
        <span className="ml-[14px] w-[27px]">РУС</span>
        <span className="ml-[17px] flex w-[72px] flex-col items-center leading-[23px]">
          <span>17:24</span>
          <span>16.11.2020</span>
        </span>
        <button type="button" aria-label="Уведомления" className="relative ml-[22px] h-[24px] w-[50px]">
          <Svg w={32} h={30}>
            <path d="M0 1h20v16h-9l-4 4v-4H0z" fill="#fff" />
            <path d="M4 6h12M4 9h12M4 12h8" stroke="#1f221e" strokeWidth="1.3" />
            <circle cx="20" cy="19" r="9.5" fill="#3a3c39" stroke="#8a8c89" />
          </Svg>
          <span className="absolute top-[10px] left-[17px] text-[13px] leading-[18px]">1</span>
        </button>
      </div>
    </div>
  );
}

export default function App() {
  return (
    <div className="relative flex h-screen flex-col overflow-hidden bg-[#bfdbff] font-['Open_Sans','Noto_Sans',sans-serif]">
      <OfficeButton />
      <TitleBar />
      <TabRow />
      <Ribbon />
      <Workspace />
      <StatusBar />
      <Taskbar />
    </div>
  );
}
